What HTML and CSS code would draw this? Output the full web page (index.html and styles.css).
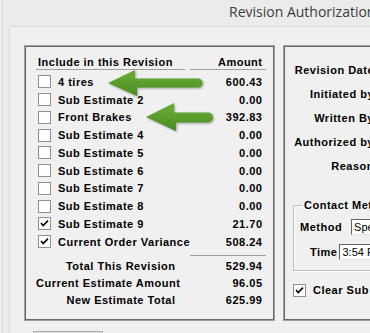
FILE: index.html
```html
<!DOCTYPE html>
<html>
<head>
<meta charset="utf-8">
<link rel="stylesheet" href="styles.css">
</head>
<body>
<div class="window">
  <div class="titlebar">Revision Authorization</div>
  <div class="content">
    <div class="panels">
      <div class="frame frame-left">
        <div class="row head">
          <div class="cell-label head-line">Include in this Revision</div>
          <div class="cell-amt head-line">Amount</div>
        </div>
        <div class="rows">
          <div class="row item"><div class="cell-label"><span class="cb"></span>4 tires</div><div class="cell-amt">600.43</div></div>
          <div class="row item"><div class="cell-label"><span class="cb"></span>Sub Estimate 2</div><div class="cell-amt">0.00</div></div>
          <div class="row item"><div class="cell-label"><span class="cb"></span>Front Brakes</div><div class="cell-amt">392.83</div></div>
          <div class="row item"><div class="cell-label"><span class="cb"></span>Sub Estimate 4</div><div class="cell-amt">0.00</div></div>
          <div class="row item"><div class="cell-label"><span class="cb"></span>Sub Estimate 5</div><div class="cell-amt">0.00</div></div>
          <div class="row item"><div class="cell-label"><span class="cb"></span>Sub Estimate 6</div><div class="cell-amt">0.00</div></div>
          <div class="row item"><div class="cell-label"><span class="cb"></span>Sub Estimate 7</div><div class="cell-amt">0.00</div></div>
          <div class="row item"><div class="cell-label"><span class="cb"></span>Sub Estimate 8</div><div class="cell-amt">0.00</div></div>
          <div class="row item"><div class="cell-label"><span class="cb checked"><svg viewBox="0 0 11 11" width="11" height="11"><path d="M2 5 L4.2 7.6 L9 2.6" fill="none" stroke="#000" stroke-width="1.6"/></svg></span>Sub Estimate 9</div><div class="cell-amt">21.70</div></div>
          <div class="row item"><div class="cell-label"><span class="cb checked"><svg viewBox="0 0 11 11" width="11" height="11"><path d="M2 5 L4.2 7.6 L9 2.6" fill="none" stroke="#000" stroke-width="1.6"/></svg></span>Current Order Variance</div><div class="cell-amt">508.24</div></div>
        </div>
        <div class="row totals-rule"><div></div><div class="rule"></div></div>
        <div class="row total"><div class="cell-total">Total This Revision</div><div class="cell-amt">529.94</div></div>
        <div class="row total"><div class="cell-total">Current Estimate Amount</div><div class="cell-amt">96.05</div></div>
        <div class="row total"><div class="cell-total">New Estimate Total</div><div class="cell-amt">625.99</div></div>
      </div>
      <div class="frame frame-right">
        <div class="form">
          <div class="flabel">Revision Date</div>
          <div class="flabel">Initiated by</div>
          <div class="flabel">Written By</div>
          <div class="flabel">Authorized by</div>
          <div class="flabel">Reason</div>
        </div>
        <fieldset class="group">
          <legend>Contact Method</legend>
          <div class="grow grow-method"><span>Method</span><span class="field field-method">Speak</span></div>
          <div class="grow grow-time"><span>Time</span><span class="field field-time">3:54 PM</span></div>
        </fieldset>
        <div class="clear-row"><span class="cb checked"><svg viewBox="0 0 11 11" width="11" height="11"><path d="M2 5 L4.2 7.6 L9 2.6" fill="none" stroke="#000" stroke-width="1.6"/></svg></span>Clear Sub Estimates</div>
      </div>
    </div>
    <div class="button"></div>
  </div>
</div>
<svg class="arrows" width="370" height="333" viewBox="0 0 370 333">
  <defs>
    <linearGradient id="g" x1="0" y1="0" x2="0" y2="1">
      <stop offset="0" stop-color="#6cb036"/>
      <stop offset="1" stop-color="#4b8a22"/>
    </linearGradient>
  </defs>
  <path d="M108 83 L135 70 L135 78.5 L198 78.5 A4.5 4.5 0 0 1 198 87.5 L137 87.5 L137 96 Z" fill="url(#g)"/>
  <path d="M146 117 L174 103 L174 112.5 L208 112.5 A5 5 0 0 1 208 122.5 L176 122.5 L176 131 Z" fill="url(#g)"/>
</svg>
</body>
</html>
```
FILE: styles.css
```css
html, body {
  margin: 0;
  padding: 0;
}
body {
  width: 370px;
  height: 333px;
  overflow: hidden;
  position: relative;
  background: #ebebeb;
  font-family: "Liberation Sans", Arial, sans-serif;
  font-size: 11px;
  font-weight: bold;
  letter-spacing: 0.5px;
  color: #000;
}
.window {
  margin-left: 2px;
  height: 333px;
  border-left: 1px solid #d9d9d9;
  box-sizing: border-box;
}
.titlebar {
  height: 26px;
  padding-left: 226px;
  font-family: "Open Sans", sans-serif;
  font-weight: normal;
  letter-spacing: 0;
  font-size: 14px;
  line-height: 24px;
  color: #3c3c3c;
  white-space: nowrap;
}
.content {
  margin-left: 6px;
  height: 307px;
  box-sizing: border-box;
  border-top: 1px solid #dadada;
  border-left: 1px solid #dadada;
  background: #f0f0f0;
  padding: 18px 0 0 14px;
  overflow: hidden;
}
.panels {
  display: flex;
  gap: 8px;
  align-items: flex-start;
}
.frame {
  height: 276px;
  box-sizing: border-box;
  border: 1px solid #a0a0a0;
  box-shadow: inset 0 0 0 1px #696969;
  flex: none;
}
.frame-left {
  width: 251px;
  padding: 0 0 0 11px;
}
.row {
  display: grid;
  grid-template-columns: 149px 76px;
  column-gap: 5px;
}
.head {
  padding-top: 9px;
}
.head-line {
  line-height: 14px;
  border-bottom: 1px solid #a0a0a0;
}
.head .cell-label {
  padding-left: 2px;
}
.rows {
  margin-top: 3px;
}
.item {
  height: 17.75px;
  align-items: center;
}
.cell-label {
  display: flex;
  align-items: center;
  gap: 7px;
  padding-left: 2px;
  white-space: nowrap;
}
.cell-amt {
  text-align: right;
  padding-right: 3.5px;
  white-space: nowrap;
}
.cb {
  width: 13px;
  height: 13px;
  box-sizing: border-box;
  border: 1px solid #8e8f8f;
  background: #fff;
  flex: none;
  display: flex;
  align-items: center;
  justify-content: center;
}
.cb svg {
  display: block;
}
.totals-rule {
  margin-top: 4px;
}
.rule {
  height: 1px;
  background: #a0a0a0;
}
.totals-rule + .total {
  margin-top: 2px;
}
.total {
  height: 17px;
  align-items: center;
}
.cell-total {
  text-align: right;
  padding-right: 9.5px;
  white-space: nowrap;
}
.frame-right {
  width: 130px;
  padding: 12px 0 0 1px;
}
.form {
  display: grid;
  grid-template-columns: 89px;
  grid-auto-rows: 24px;
}
.flabel {
  line-height: 24px;
  text-align: right;
  white-space: nowrap;
}
.group {
  margin: 20px 0 0 8px;
  padding: 6px 0 10px 0;
  border: 1px solid #bdbdbd;
  box-shadow: inset 1px 1px 0 #fff, 1px 1px 0 #fff;
  min-width: 0;
}
.group legend {
  padding: 0 2px;
  margin-left: 8px;
  line-height: 14px;
  white-space: nowrap;
}
.grow {
  display: flex;
  align-items: center;
  height: 17px;
  white-space: nowrap;
}
.grow-method {
  padding-left: 6px;
  gap: 9px;
}
.grow-time {
  margin-top: 8px;
  padding-left: 16px;
  gap: 2px;
}
.field {
  display: block;
  height: 16px;
  width: 80px;
  box-sizing: border-box;
  background: #fff;
  border: 1px solid;
  border-color: #646464 #e3e3e3 #e3e3e3 #646464;
  font-weight: normal;
  letter-spacing: 0;
  line-height: 14px;
  padding-left: 2px;
  flex: none;
}
.clear-row {
  margin: 11px 0 0 8px;
  display: flex;
  align-items: center;
  gap: 7px;
  height: 16px;
  white-space: nowrap;
}
.button {
  margin: 10px 0 0 9px;
  width: 70px;
  height: 22px;
  box-sizing: border-box;
  border: 1px solid #adadad;
  background: #e1e1e1;
}
.arrows {
  position: absolute;
  left: 0;
  top: 0;
  pointer-events: none;
  filter: drop-shadow(1px 1px 1px rgba(0, 0, 0, 0.35));
}
```
